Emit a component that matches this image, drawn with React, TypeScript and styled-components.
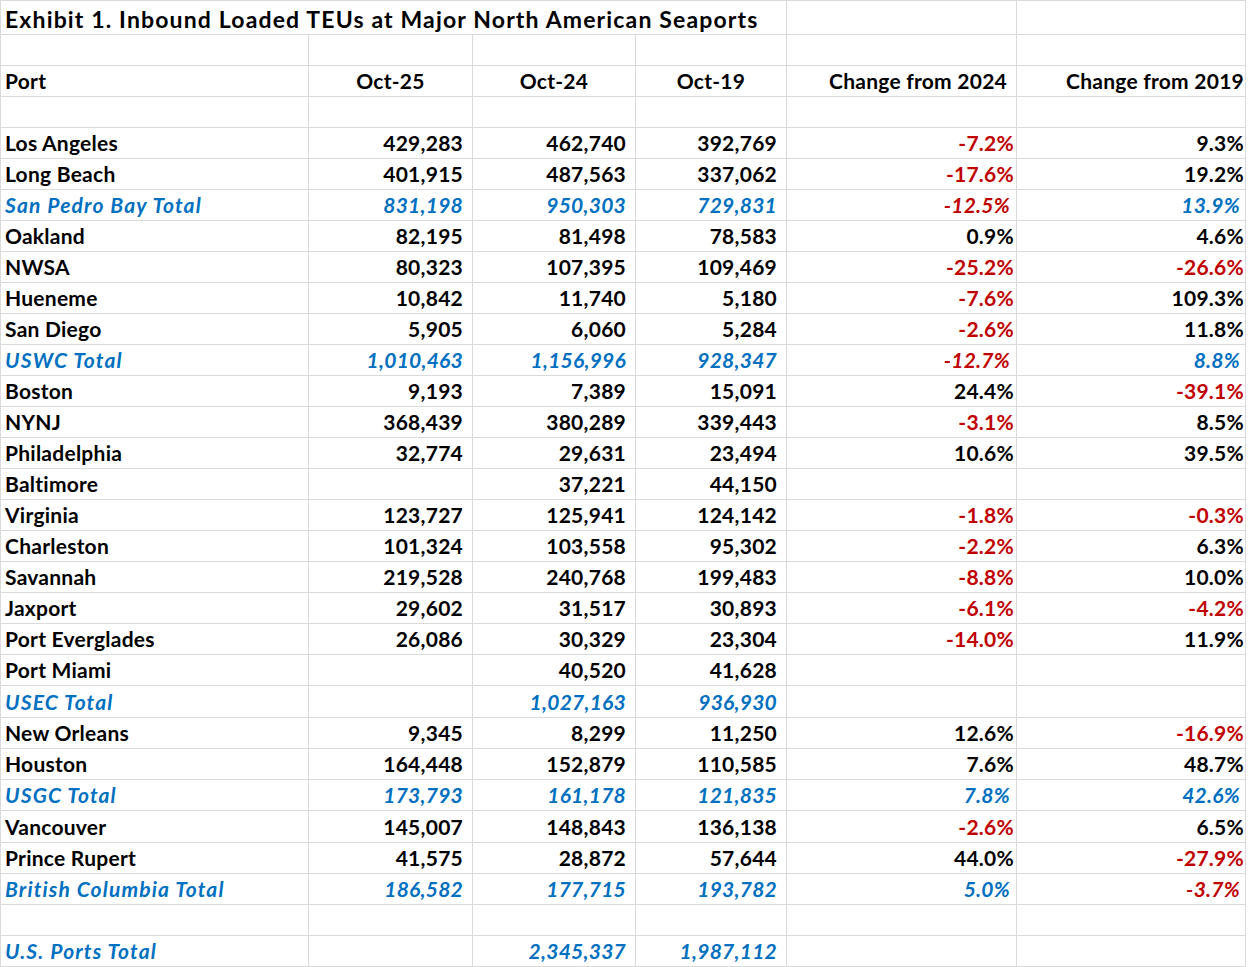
import React from "react"
import styled, { createGlobalStyle } from "styled-components"

const GlobalStyle = createGlobalStyle`
  html, body {
    margin: 0;
    padding: 0;
    background: #ffffff;
  }
  body {
    font-family: Lato, "Open Sans", "Liberation Sans", sans-serif;
  }
`

type Row = {
  cells: string[]
  total?: boolean
  tall?: boolean
}

const rows: Row[] = [
  { cells: ["Los Angeles", "429,283", "462,740", "392,769", "-7.2%", "9.3%"] },
  { cells: ["Long Beach", "401,915", "487,563", "337,062", "-17.6%", "19.2%"] },
  { cells: ["San Pedro Bay Total", "831,198", "950,303", "729,831", "-12.5%", "13.9%"], total: true },
  { cells: ["Oakland", "82,195", "81,498", "78,583", "0.9%", "4.6%"] },
  { cells: ["NWSA", "80,323", "107,395", "109,469", "-25.2%", "-26.6%"] },
  { cells: ["Hueneme", "10,842", "11,740", "5,180", "-7.6%", "109.3%"] },
  { cells: ["San Diego", "5,905", "6,060", "5,284", "-2.6%", "11.8%"] },
  { cells: ["USWC Total", "1,010,463", "1,156,996", "928,347", "-12.7%", "8.8%"], total: true },
  { cells: ["Boston", "9,193", "7,389", "15,091", "24.4%", "-39.1%"] },
  { cells: ["NYNJ", "368,439", "380,289", "339,443", "-3.1%", "8.5%"] },
  { cells: ["Philadelphia", "32,774", "29,631", "23,494", "10.6%", "39.5%"] },
  { cells: ["Baltimore", "", "37,221", "44,150", "", ""] },
  { cells: ["Virginia", "123,727", "125,941", "124,142", "-1.8%", "-0.3%"] },
  { cells: ["Charleston", "101,324", "103,558", "95,302", "-2.2%", "6.3%"] },
  { cells: ["Savannah", "219,528", "240,768", "199,483", "-8.8%", "10.0%"] },
  { cells: ["Jaxport", "29,602", "31,517", "30,893", "-6.1%", "-4.2%"] },
  { cells: ["Port Everglades", "26,086", "30,329", "23,304", "-14.0%", "11.9%"] },
  { cells: ["Port Miami", "", "40,520", "41,628", "", ""] },
  { cells: ["USEC Total", "", "1,027,163", "936,930", "", ""], total: true, tall: true },
  { cells: ["New Orleans", "9,345", "8,299", "11,250", "12.6%", "-16.9%"] },
  { cells: ["Houston", "164,448", "152,879", "110,585", "7.6%", "48.7%"] },
  { cells: ["USGC Total", "173,793", "161,178", "121,835", "7.8%", "42.6%"], total: true },
  { cells: ["Vancouver", "145,007", "148,843", "136,138", "-2.6%", "6.5%"], tall: true },
  { cells: ["Prince Rupert", "41,575", "28,872", "57,644", "44.0%", "-27.9%"] },
  { cells: ["British Columbia Total", "186,582", "177,715", "193,782", "5.0%", "-3.7%"], total: true },
  { cells: ["", "", "", "", "", ""] },
  { cells: ["U.S. Ports Total", "", "2,345,337", "1,987,112", "", ""], total: true },
]

const Sheet = styled.div`
  display: grid;
  grid-template-columns: 307px 163px 162px 150px 229px 228px;
  gap: 1px;
  padding: 1px;
  width: 1246px;
  box-sizing: border-box;
  background: #dadada;
`

const Cell = styled.div<{ $align?: "left" | "right" | "center"; $pad?: number; $tall?: boolean }>`
  background: #ffffff;
  height: ${(p) => (p.$tall ? 31 : 30)}px;
  font-size: 21px;
  font-weight: 700;
  letter-spacing: 0.25px;
  line-height: ${(p) => (p.$tall ? 31 : 30)}px;
  color: #000000;
  white-space: nowrap;
  overflow: hidden;
  text-align: ${(p) => p.$align ?? "left"};
  padding: ${(p) => (p.$align === "right" ? `0 ${p.$pad ?? 9}px 0 0` : p.$align === "center" ? "0" : "0 0 0 4px")};
`

const TitleCell = styled(Cell)`
  grid-column: span 4;
  height: 33px;
  font-size: 23px;
  letter-spacing: 1.15px;
  line-height: 33px;
  padding-top: 2px;
  box-sizing: border-box;
`

const BlankTop = styled(Cell)`
  height: 33px;
`

const Value = styled.span<{ $total?: boolean; $neg?: boolean; $label?: boolean }>`
  color: ${(p) => (p.$neg ? "#c00000" : p.$total ? "#0070c0" : "#000000")};
  font-style: ${(p) => (p.$total ? "italic" : "normal")};
  letter-spacing: ${(p) => (p.$total && p.$label ? "1.15px" : "0.25px")};
`

const isNeg = (v: string) => v.startsWith("-")

const App: React.FC = () => {
  return (
    <>
      <GlobalStyle />
      <Sheet>
        <TitleCell>Exhibit 1. Inbound Loaded TEUs at Major North American Seaports</TitleCell>
        <BlankTop />
        <BlankTop />

        {Array.from({ length: 6 }).map((_, i) => (
          <Cell key={`blank-a-${i}`} />
        ))}

        <Cell>Port</Cell>
        <Cell $align="center">Oct-25</Cell>
        <Cell $align="center">Oct-24</Cell>
        <Cell $align="center">Oct-19</Cell>
        <Cell $align="right" $pad={9}>Change from 2024</Cell>
        <Cell $align="right" $pad={1}>Change from 2019</Cell>

        {Array.from({ length: 6 }).map((_, i) => (
          <Cell key={`blank-b-${i}`} />
        ))}

        {rows.map((row, r) =>
          row.cells.map((v, c) => {
            const pct = c >= 4
            const pad = c === 4 ? 2 : c === 5 ? 1 : 9
            return (
              <Cell
                key={`${r}-${c}`}
                $tall={row.tall}
                $align={c === 0 ? "left" : "right"}
                $pad={row.total && pct ? pad + 4 : pad}
              >
                {v && (
                  <Value $total={row.total} $neg={pct && isNeg(v)} $label={c === 0}>
                    {v}
                  </Value>
                )}
              </Cell>
            )
          })
        )}
      </Sheet>
    </>
  )
}

export default App
